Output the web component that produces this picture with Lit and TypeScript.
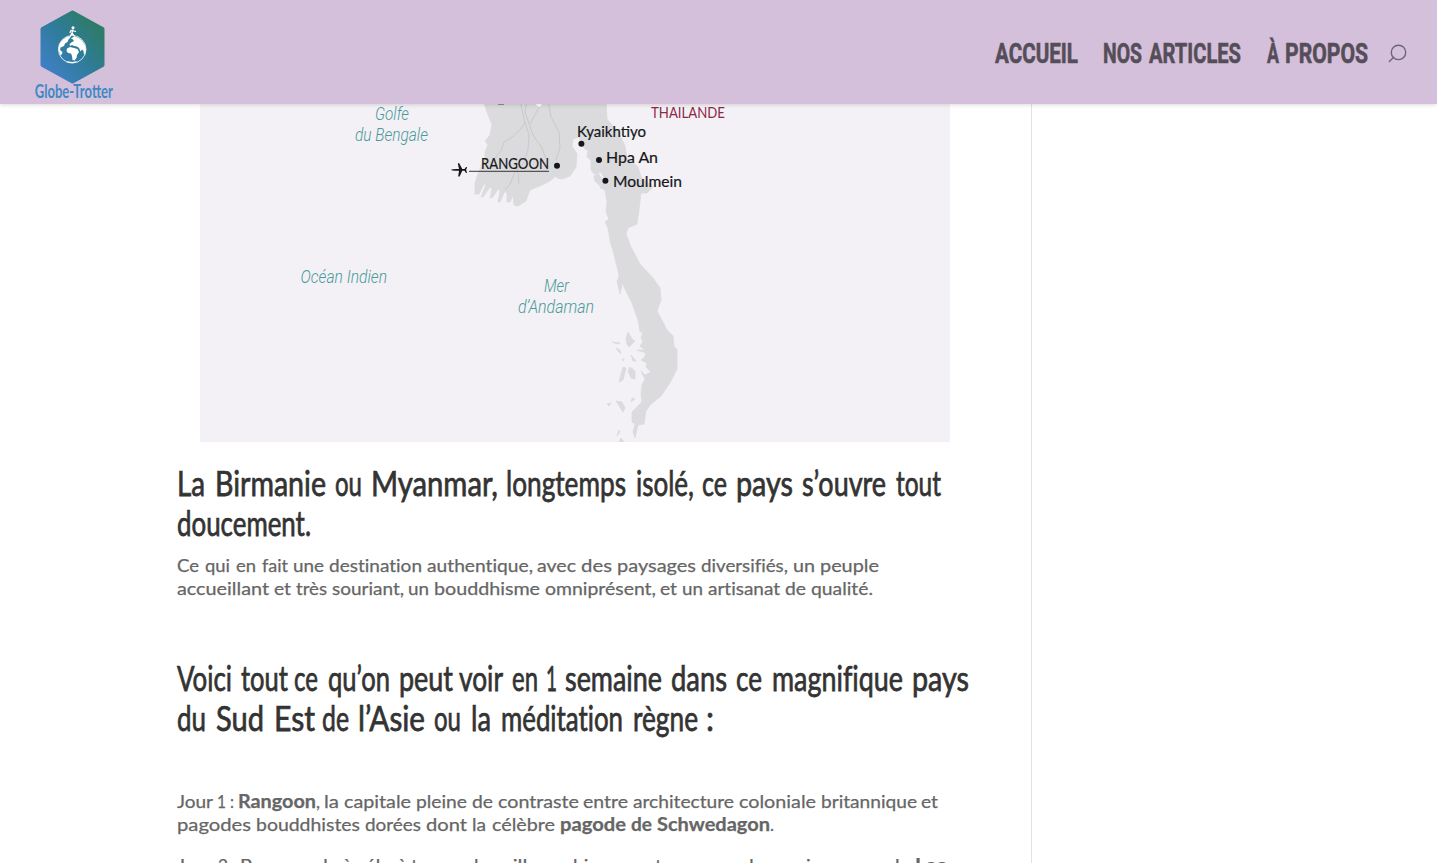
import { LitElement, html, svg, css } from "lit";
import { customElement, property } from "lit/decorators.js";

// A word with its left edge and right edge along the line.
type Word = [string, number, number, boolean?];

@customElement("fitted-line")
class FittedLine extends LitElement {
  @property({ attribute: false }) words: Word[] = [];
  @property({ type: Number }) base = 18;
  static styles = css`
    :host { display: block; height: 100%; }
    svg { display: block; width: 100%; height: 100%; overflow: visible; }
    text { fill: currentColor; stroke: currentColor; stroke-width: var(--ink, 0); white-space: pre; font-variant-ligatures: none; }
    .bold { font-weight: 700; }
  `;
  render() {
    return html`<svg>${this.words.map(([t, a, b, bold]) =>
      svg`<text class=${bold ? "bold" : ""} x=${a} y=${this.base} textLength=${b - a} lengthAdjust="spacingAndGlyphs">${t}</text>`)}</svg>`;
  }
}

@customElement("site-header")
class SiteHeader extends LitElement {
  static styles = css`
    :host { display: flex; height: 104px; box-sizing: border-box; padding: 0 29px 0 34px; justify-content: space-between;
      background: #d4c0db; box-shadow: 0 1px 4px rgba(0,0,0,.14); position: relative; z-index: 2; }
    .logo { width: 80px; height: 104px; display: block; }
    .brand { font: 700 18px Lato, sans-serif; fill: #3f88c5; }
    nav { display: flex; align-items: flex-start; padding-top: 34px; color: #554e59;
      font: 700 28px/38px Roboto, sans-serif; --ink: .6px; }
    .item { height: 38px; }
    .a { width: 108px; } .b { width: 164px; } .c { width: 121px; }
    .search { width: 20px; height: 20px; margin-top: 10px; }
  `;
  render() {
    return html`
      <svg class="logo" viewBox="34 0 80 104">
        <defs><linearGradient id="g" x1="0" y1="1" x2="1" y2="0">
          <stop offset=".1" stop-color="#407fc6"/><stop offset=".5" stop-color="#2f7c9a"/><stop offset=".85" stop-color="#2e7b69"/>
        </linearGradient></defs>
        <path d="M72.5 12.5 L102.5 29 V65 L72.5 81.5 L42.5 65 V29Z" fill="url(#g)" stroke="url(#g)" stroke-width="4" stroke-linejoin="round"/>
        <circle cx="72.2" cy="49.3" r="13.8" fill="none" stroke="#fff" stroke-width=".8"/>
        <path fill="#fff" d="M58.6 47 L60 43 63 39.5 67 37 71 36 70 38 68.5 39.5 67.5 42 65 43.5 64 46 60.5 47.5 60 50 62.5 52 62 54 60.5 55.5 58.8 51Z
          M71 38.5 L74 36.5 78 37.5 82 40.5 85 45 86 50 85 54 84 55 83.5 51 82 49.5 80.5 51.5 79 48 77 46.5 74 46 72 45 70 46 69.5 44 72 42 74 41 73 39.5Z
          M67 48.5 L70 47 74 48 77.5 49 79 52 77 55 76.5 58 74.5 60.5 72.5 60 72 56 71 53.5 68 53 66.5 51Z M66 61 L72 62 78 61 74 63 69 63Z"/>
        <circle cx="73" cy="27.8" r="1.5" fill="#fff"/>
        <path d="M73 29.5 L72 33 74.8 36.5 M72 33 L70 36.5 M69.8 33 L71 30.5 76 31.5" fill="none" stroke="#fff" stroke-width="1.2"/>
        <text class="brand" x="34.8" y="97.5" textLength="78" lengthAdjust="spacingAndGlyphs">Globe-Trotter</text>
      </svg>
      <nav>
        <fitted-line class="item a" .base=${29} .words=${[["ACCUEIL", 0, 83]]}></fitted-line>
        <fitted-line class="item b" .base=${29} .words=${[["NOS", 0, 39], ["ARTICLES", 46, 138]]}></fitted-line>
        <fitted-line class="item c" .base=${29} .words=${[["À", 0, 12], ["PROPOS", 18, 101]]}></fitted-line>
        <svg class="search" viewBox="0 0 20 20" fill="none" stroke="#6c6470" stroke-width="1.35" stroke-linecap="round">
          <circle cx="10.5" cy="8.4" r="7.2"/><path d="M5.5 13.5 L1.3 17.5"/>
        </svg>
      </nav>`;
  }
}

@customElement("travel-map")
class TravelMap extends LitElement {
  static styles = css`
    :host { display: block; width: 750px; height: 338px; background: #f3f1f5; }
    svg { display: block; overflow: hidden; }
    text { font-variant-ligatures: none; }
    .sea { font: italic 300 18.5px Roboto, sans-serif; fill: #4a9999; }
    .city { font: 400 15px Lato, sans-serif; fill: #17171a; stroke: #17171a; stroke-width: .2px; }
    .country { font: 400 15px Lato, sans-serif; fill: #8c2947; }
    .land { fill: #dbdbdd; stroke: #dbdbdd; stroke-width: .8; stroke-linejoin: round; }
    .river { fill: none; stroke: #c5c6c9; stroke-width: .9; }
  `;
  private label(c: string, t: string, a: number, b: number, y: number) {
    return svg`<text class=${c} x=${a} y=${y} textLength=${b - a} lengthAdjust="spacingAndGlyphs">${t}</text>`;
  }
  render() {
    return html`<svg width="750" height="338" viewBox="200 104 750 338">
      <path class="land" d="M483 100 L487 112 492 125 490 135 485 141 488 145 485 152 485 159 482 164 478 174 475 183 475 194 479 194 484 184 486 185 481 197 483 197 490 187 492 189 490 198 493 197 498 189 500 191 498 202 500 202 505 191 507 194 507 202 510 202 513 195 514 205 518 206 526 201 530 190 540 186 550 181 556 176 552 170 557 178 562 179 570 176 576 167 577 154 572 146 573 139 579 137 583 147 588 151 587 157 591 160 591 170 594 174 601 172 604 178 600 188 605 190 607 202 606 212 609 219 605 222 608 228 610 240 613 250 616 263 621 280 625 289 632 303 638 320 640 332 643 332 641 337 643 342 640 346 645 350 637 350 646 353 644 358 641 360 647 363 646 367 651 372 645 375 641 371 645 379 642 385 641 395 642 402 638 406 632 412 632 422 635 424 633 432 635 438 638 425 644 424 646 411 650 405 661 396 670 383 677 369 677 349 674 347 673 336 667 330 663 322 657 311 661 300 660 288 653 278 640 264 631 247 626 234 628 228 637 224 639 210 641 193 647 193 653 187 641 177 638 167 627 158 625 146 619 133 607 119 606 100Z"/>
      <path class="land" d="M594 176 L598 173 602 179 600 186 595 181Z M610 240 L613 242 615 255 613 250Z M617 264 L621 272 622 285 620 294 617 281 619 277Z
        M628 332 L632 339 635 341 629 347 627 344 626 339Z M612 342 L620 343 617 344Z M616 348 L620 350 621 354 618 351Z M622 359 L624 359 623 361Z M631 355 L636 361 633 361Z
        M623 367 L626 368 623 380 619 382Z M630 367 L635 371 635 379 631 378 628 371Z M607 404 L611 403 609 406Z M616 401 L622 402 625 408 623 412Z M632 398 L635 399 631 402Z M620 432 L617 436 619 430Z M621 438 L624 442 619 442Z"/>
      <g class="river">
        <path d="M520 100 L525 123 520 130 512 137 504 142 501 151 495 158 M527 100 L525 112 533 135 542 148 546 159 M548 100 L551 117 559 132 560 148 556 160 M525 122 L529 135 528 150 523 164 515 172 510 184 505 190 M518 171 L519 184 M543 100 L530 124"/>
      </g>
      <path d="M536 104 H542 L540 107 537 106Z" fill="#fff"/><path d="M498 104 H504" stroke="#444"/>
      <path d="M469 171.3 H549" stroke="#222" stroke-width=".9"/>
      <path fill="#17171a" d="M451 169.8 Q452 168.9 456.5 168.9 L459 168.9 457.8 163.3 459.2 163.3 462.3 168.9 464.5 169 466 167 467 167 466.2 169.9 467 173 466 173 464.5 170.8 462.3 170.8 459.6 176.6 458.2 176.6 459 170.8 456.5 170.8 Q452 170.8 451 169.8Z"/>
      ${[[557, 165.7], [581.4, 143.7], [599, 160], [605.4, 180.8]].map(([x, y]) => svg`<circle cx=${x} cy=${y} r="3" fill="#17171a"/>`)}
      ${this.label("sea", "Golfe", 375, 409, 120)}
      ${this.label("sea", "du Bengale", 355, 428, 141)}
      ${this.label("sea", "Océan Indien", 300.5, 387, 283)}
      ${this.label("sea", "Mer", 544, 569, 292)}
      ${this.label("sea", "d’Andaman", 518, 594, 313)}
      ${this.label("country", "THAILANDE", 651, 725, 118)}
      ${this.label("city", "Kyaikhtiyo", 577, 646, 137)}
      ${this.label("city", "Hpa An", 606, 658, 163.3)}
      ${this.label("city", "Moulmein", 613, 682, 187.3)}
      ${this.label("city", "RANGOON", 481, 549, 169)}
    </svg>`;
  }
}

const intro: Word[][] = [
  [["La", 0, 28], ["Birmanie", 38, 149], ["ou", 158, 185], ["Myanmar,", 194, 321], ["longtemps", 329, 449], ["isolé,", 459, 517], ["ce", 525, 550], ["pays", 559, 616], ["s’ouvre", 625, 709], ["tout", 719, 764]],
  [["doucement.", 0, 134]],
];
const week: Word[][] = [
  [["Voici", 0, 55], ["tout", 64, 111], ["ce", 117, 141], ["qu’on", 151, 213], ["peut", 222, 276], ["voir", 282, 326], ["en", 335, 361], ["1", 369, 380], ["semaine", 388, 485], ["dans", 494, 550], ["ce", 559, 585], ["magnifique", 595, 726], ["pays", 735, 792]],
  [["du", 0, 29], ["Sud", 39, 87], ["Est", 97, 138], ["de", 145, 172], ["l’Asie", 181, 248], ["ou", 257, 284], ["la", 294, 314], ["méditation", 324, 446], ["règne", 456, 521], [":", 529, 537]],
];
const about: Word[][] = [
  [["Ce", 0, 22], ["qui", 28, 53], ["en", 59, 79], ["fait", 85, 111], ["une", 116, 147], ["destination", 152, 245], ["authentique,", 250, 356], ["avec", 360, 399], ["des", 404, 435], ["paysages", 440, 519], ["diversifiés,", 524, 611], ["un", 616, 638], ["peuple", 643, 702]],
  [["accueillant", 0, 92], ["et", 97, 114], ["très", 119, 150], ["souriant,", 155, 227], ["un", 231, 252], ["bouddhisme", 257, 363], ["omniprésent,", 368, 479], ["et", 483, 500], ["un", 505, 526], ["artisanat", 531, 603], ["de", 608, 629], ["qualité.", 634, 696]],
];
const day1: Word[][] = [
  [["Jour", 0, 36], ["1", 40, 49], [":", 53, 57], ["Rangoon", 61, 139, true], [",", 139, 143], ["la", 147, 162], ["capitale", 167, 234], ["pleine", 239, 290], ["de", 295, 316], ["contraste", 321, 402], ["entre", 406, 451], ["architecture", 456, 557], ["coloniale", 562, 639], ["britannique", 644, 740], ["et", 744, 761]],
  [["pagodes", 0, 74], ["bouddhistes", 79, 183], ["dorées", 188, 244], ["dont", 249, 290], ["la", 295, 309], ["célèbre", 315, 378], ["pagode", 383, 449, true], ["de", 454, 475, true], ["Schwedagon", 480, 593, true], [".", 593, 597]],
];
const day2: Word[][] = [
  [["Jour", 0, 36], ["2", 41, 51], [":", 54, 58], ["Promenade", 63, 161], ["à", 166, 175], ["vélo", 179, 214], ["à", 221, 230], ["travers", 234, 293], ["les", 297, 320], ["villages", 325, 391], ["birmans", 396, 463], ["et", 468, 485], ["promenade", 490, 587], ["en", 592, 613], ["pirogue", 618, 683], ["sur", 688, 713], ["le", 718, 733], ["Lac", 738, 769, true]],
];

@customElement("app-root")
class AppRoot extends LitElement {
  static styles = css`
    :host { display: block; height: 863px; overflow: hidden; background: #fff; }
    .page { display: flex; height: 759px; }
    main { width: 854px; padding-left: 177px; border-right: 1px solid #e2e2e2; display: flex; flex-direction: column; }
    .map { margin: 0 0 22px 23px; flex: none; }
    h2, p { margin: 0; flex: none; font-family: Lato, sans-serif; }
    h2 { font-size: 35px; font-weight: 400; color: #333; --ink: .75px; }
    h2 fitted-line { height: 40px; }
    p { font-size: 18px; font-weight: 400; color: #666; --ink: .25px; }
    p fitted-line { height: 23px; }
    .about { margin: 10px 0 59px; }
    .day1 { margin: 51px 0 18px; }
  `;
  private lines(l: Word[][], base: number) {
    return l.map((w) => html`<fitted-line .words=${w} .base=${base}></fitted-line>`);
  }
  render() {
    return html`
      <site-header></site-header>
      <div class="page">
        <main>
          <travel-map class="map"></travel-map>
          <h2>${this.lines(intro, 31.5)}</h2>
          <p class="about">${this.lines(about, 18)}</p>
          <h2>${this.lines(week, 31.5)}</h2>
          <p class="day1">${this.lines(day1, 18)}</p>
          <p>${this.lines(day2, 18)}</p>
        </main>
      </div>`;
  }
}
